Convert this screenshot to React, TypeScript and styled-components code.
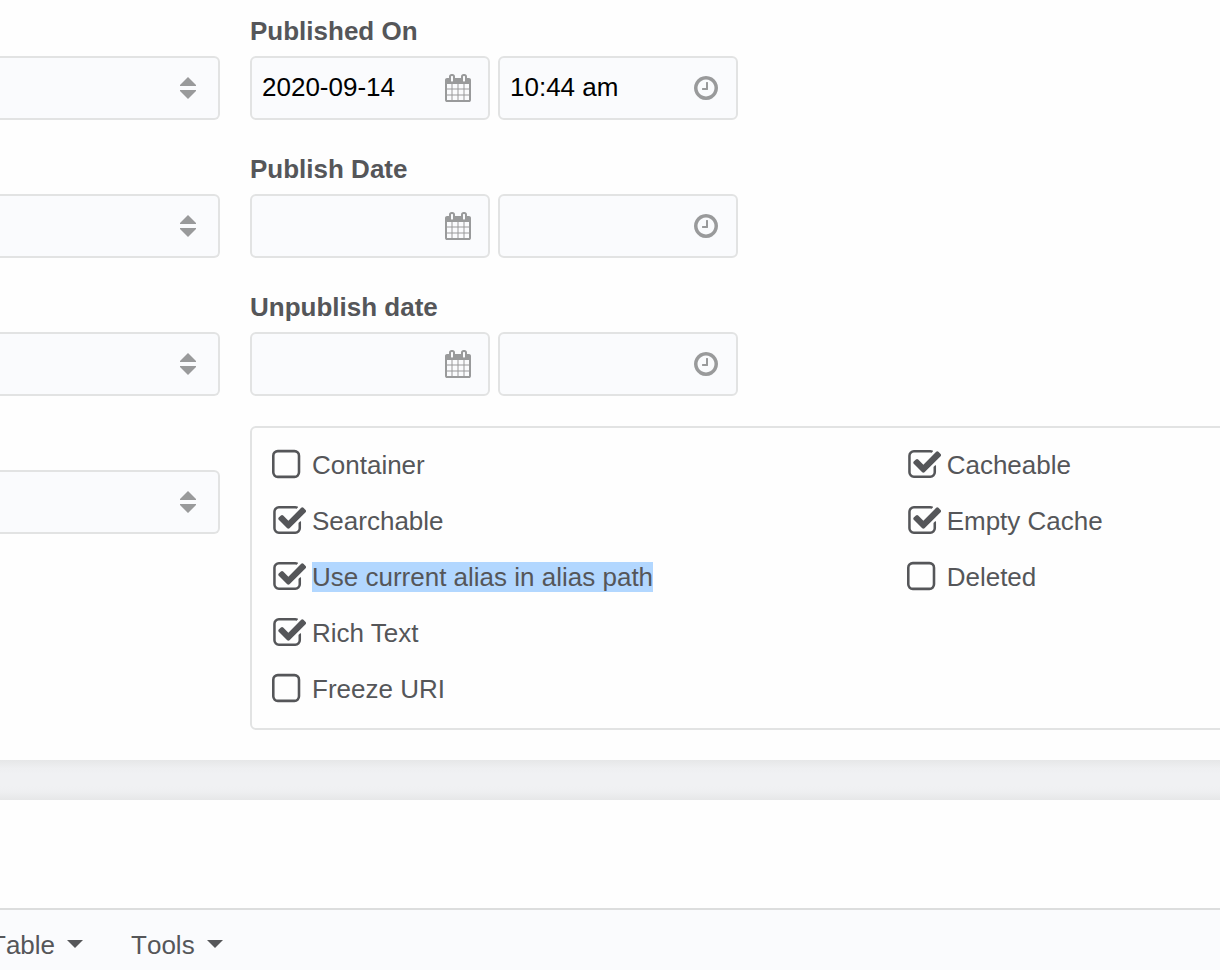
import React, { useState } from "react";
import styled, { createGlobalStyle } from "styled-components";

const GlobalStyle = createGlobalStyle`
  *, *::before, *::after { box-sizing: border-box; }
  body {
    margin: 0;
    background: #f0f1f3;
    color: #555659;
    font-family: "Liberation Sans", Helvetica, Arial, sans-serif;
    font-size: 26px;
    line-height: 30px;
    overflow-x: hidden;
  }
  input, select, button { font: inherit; color: inherit; }
`;

const Page = styled.div`
  display: flex;
  flex-direction: column;
  min-height: 100vh;
  overflow: hidden;
`;

const Panel = styled.section`
  background: #fefefe;
`;

const SettingsPanel = styled(Panel)`
  display: grid;
  grid-template-columns: 220px minmax(0, 1fr);
  column-gap: 30px;
  padding: 12px 0 30px;
`;

const PanelGap = styled.div`
  height: 40px;
  background: linear-gradient(#e6e7e8, #eeeff1 8px, #f0f1f3 14px, #f0f1f3 26px, #eeeff1 32px, #e6e7e8);
`;

const EditorPanel = styled(Panel)`
  display: flex;
  flex-direction: column;
  flex: 1;
`;

const Column = styled.div`
  display: flex;
  flex-direction: column;
  gap: 30px;
`;

const SelectColumn = styled(Column)`
  padding-top: 44px;
  gap: 74px;
`;

const FieldGroup = styled.div`
  display: flex;
  flex-direction: column;
`;

const FieldLabel = styled.label`
  margin-bottom: 6px;
  font-weight: 700;
  line-height: 38px;
`;

const FieldRow = styled.div`
  display: flex;
  gap: 8px;
`;

const Control = styled.div<{ $width?: string }>`
  position: relative;
  width: ${({ $width }) => $width ?? "100%"};
`;

const TextInput = styled.input`
  display: block;
  width: 100%;
  height: 64px;
  padding: 0 56px 2px 10px;
  border: 2px solid #e2e3e3;
  border-radius: 6px;
  background: #fafbfd;
  color: #000;
  outline: none;
`;

const Select = styled.select`
  display: block;
  width: 100%;
  height: 64px;
  padding: 0 56px 0 10px;
  appearance: none;
  border: 2px solid #e2e3e3;
  border-left: 0;
  border-radius: 0 6px 6px 0;
  background: #fafbfd;
  outline: none;
`;

const Adornment = styled.svg`
  position: absolute;
  top: 18px;
  right: 18px;
  width: 28px;
  height: 28px;
  fill: #999a9b;
  pointer-events: none;
`;

const OptionsBox = styled.div`
  display: grid;
  grid-template-columns: 2fr 1fr;
  margin-right: -6px;
  padding: 8px 0 12px 20px;
  border: 2px solid #e2e3e3;
  border-radius: 6px;
`;

const OptionRow = styled.label`
  display: flex;
  align-items: center;
  gap: 4px;
  height: 56px;
`;

const Tick = styled.span`
  position: relative;
  flex: none;
  width: 36px;
  height: 36px;
`;

const TickInput = styled.input`
  position: absolute;
  inset: 0;
  width: 100%;
  height: 100%;
  margin: 0;
  opacity: 0;
`;

const TickIcon = styled.svg`
  display: block;
  width: 36px;
  height: 36px;
  fill: currentColor;
`;

const OptionText = styled.span<{ $highlighted?: boolean }>`
  margin-top: 2px;
  background: ${({ $highlighted }) => ($highlighted ? "#b2d7ff" : "transparent")};
`;

const MenuBar = styled.nav`
  display: flex;
  flex: 1;
  align-items: flex-start;
  margin-top: 108px;
  padding: 20px 0 10px;
  border-top: 2px solid #dcdddd;
  background: #fafbfd;
`;

const MenuList = styled.div`
  display: flex;
  margin-left: -34px;
`;

const MenuButton = styled.button`
  display: flex;
  align-items: center;
  gap: 12px;
  padding: 0 24px;
  border: 0;
  background: none;
  line-height: 30px;
  font-kerning: none;
`;

const Caret = styled.svg`
  width: 16px;
  height: 10px;
  fill: currentColor;
`;

const CALENDAR =
  "M192 1664h288v-288h-288v288zm352 0h320v-288h-320v288zm-352-352h288v-320h-288v320zm352 0h320v-320h-320v320zm-352-384h288v-288h-288v288zm736 736h320v-288h-320v288zm-384-736h320v-288h-320v288zm768 736h288v-288h-288v288zm-384-352h320v-320h-320v320zm-352-864v-288q0-13-9.5-22.5t-22.5-9.5h-64q-13 0-22.5 9.5t-9.5 22.5v288q0 13 9.5 22.5t22.5 9.5h64q13 0 22.5-9.5t9.5-22.5zm736 864h288v-320h-288v320zm-384-384h320v-288h-320v288zm384 0h288v-288h-288v288zm32-480v-288q0-13-9.5-22.5t-22.5-9.5h-64q-13 0-22.5 9.5t-9.5 22.5v288q0 13 9.5 22.5t22.5 9.5h64q13 0 22.5-9.5t9.5-22.5zm384-64v1280q0 52-38 90t-90 38h-1408q-52 0-90-38t-38-90v-1280q0-52 38-90t90-38h128v-96q0-66 47-113t113-47h64q66 0 113 47t47 113v96h384v-96q0-66 47-113t113-47h64q66 0 113 47t47 113v96h128q52 0 90 38t38 90z";
const CLOCK =
  "M1024 544v448q0 14-9 23t-23 9h-320q-14 0-23-9t-9-23v-64q0-14 9-23t23-9h224v-352q0-14 9-23t23-9h64q14 0 23 9t9 23zm416 352q0-148-73-273t-198-198-273-73-273 73-198 198-73 273 73 273 198 198 273 73 273-73 198-198 73-273zm224 0q0 209-103 385.5t-279.5 279.5-385.5 103-385.5-103-279.5-279.5-103-385.5 103-385.5 279.5-279.5 385.5-103 385.5 103 279.5 279.5 103 385.5z";
const CHECKED =
  "M1472 930v318q0 119-84.5 203.5t-203.5 84.5h-832q-119 0-203.5-84.5t-84.5-203.5v-832q0-119 84.5-203.5t203.5-84.5h832q63 0 117 25 15 7 18 23 3 17-9 29l-49 49q-10 10-23 10-3 0-9-2-23-6-45-6h-832q-66 0-113 47t-47 113v832q0 66 47 113t113 47h832q66 0 113-47t47-113v-254q0-13 9-22l64-64q10-10 23-10 6 0 12 3 20 8 20 29zm231-489l-814 814q-24 24-57 24t-57-24l-430-430q-24-24-24-57t24-57l110-110q24-24 57-24t57 24l263 263 647-647q24-24 57-24t57 24l110 110q24 24 24 57t-24 57z";
const UNCHECKED =
  "M1312 256h-832q-66 0-113 47t-47 113v832q0 66 47 113t113 47h832q66 0 113-47t47-113v-832q0-66-47-113t-113-47zm288 160v832q0 119-84.5 203.5t-203.5 84.5h-832q-119 0-203.5-84.5t-84.5-203.5v-832q0-119 84.5-203.5t203.5-84.5h832q119 0 203.5 84.5t84.5 203.5z";

function SelectField({ label }: { label: string }) {
  return (
    <Control>
      <Select aria-label={label} />
      <Adornment viewBox="0 0 28 28" aria-hidden="true">
        <path d="M14 3l8 8v1H6v-1zM14 25l8-8v-1H6v1z" />
      </Adornment>
    </Control>
  );
}

interface DateTimeProps {
  id: string;
  label: string;
  date?: string;
  time?: string;
}

function DateTimeField({ id, label, date = "", time = "" }: DateTimeProps) {
  return (
    <FieldGroup>
      <FieldLabel htmlFor={id}>{label}</FieldLabel>
      <FieldRow>
        <Control $width="240px">
          <TextInput id={id} type="text" defaultValue={date} />
          <Adornment viewBox="0 0 1792 1792" aria-hidden="true">
            <path d={CALENDAR} />
          </Adornment>
        </Control>
        <Control $width="240px">
          <TextInput type="text" aria-label={`${label} time`} defaultValue={time} />
          <Adornment viewBox="0 0 1792 1792" aria-hidden="true">
            <path d={CLOCK} />
          </Adornment>
        </Control>
      </FieldRow>
    </FieldGroup>
  );
}

interface OptionProps {
  label: string;
  initial?: boolean;
  highlighted?: boolean;
}

function Option({ label, initial = false, highlighted }: OptionProps) {
  const [checked, setChecked] = useState(initial);
  return (
    <OptionRow>
      <Tick>
        <TickInput type="checkbox" checked={checked} onChange={(e) => setChecked(e.target.checked)} />
        <TickIcon viewBox={checked ? "4 -78 1820 1820" : "192 -64 1792 1792"} aria-hidden="true">
          <path d={checked ? CHECKED : UNCHECKED} />
        </TickIcon>
      </Tick>
      <OptionText $highlighted={highlighted}>{label}</OptionText>
    </OptionRow>
  );
}

export default function App() {
  return (
    <>
      <GlobalStyle />
      <Page>
        <SettingsPanel>
          <SelectColumn>
            <SelectField label="Resource type" />
            <SelectField label="Content type" />
            <SelectField label="Content disposition" />
            <SelectField label="Class" />
          </SelectColumn>
          <Column>
            <DateTimeField id="published-on" label="Published On" date="2020-09-14" time="10:44 am" />
            <DateTimeField id="publish-date" label="Publish Date" />
            <DateTimeField id="unpublish-date" label="Unpublish date" />
            <OptionsBox>
              <div>
                <Option label="Container" />
                <Option label="Searchable" initial />
                <Option label="Use current alias in alias path" initial highlighted />
                <Option label="Rich Text" initial />
                <Option label="Freeze URI" />
              </div>
              <div>
                <Option label="Cacheable" initial />
                <Option label="Empty Cache" initial />
                <Option label="Deleted" />
              </div>
            </OptionsBox>
          </Column>
        </SettingsPanel>
        <PanelGap />
        <EditorPanel>
          <MenuBar>
            <MenuList>
              {["Table", "Tools"].map((name) => (
                <MenuButton key={name} type="button">
                  {name}
                  <Caret viewBox="0 0 16 10" aria-hidden="true">
                    <path d="M0 0h16L8 8z" />
                  </Caret>
                </MenuButton>
              ))}
            </MenuList>
          </MenuBar>
        </EditorPanel>
      </Page>
    </>
  );
}
